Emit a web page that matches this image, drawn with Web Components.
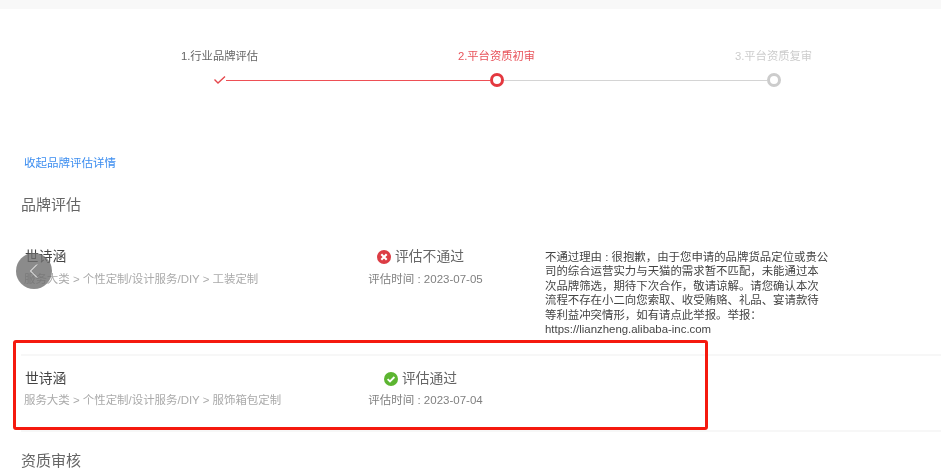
<!DOCTYPE html>
<html lang="zh">
<head>
<meta charset="utf-8">
<title>品牌评估</title>
<style>
    html, body { margin: 0; height: 470px; overflow: hidden; background: #fff; }
    body {
        position: relative;
        font-family: "Liberation Sans", "Noto Sans CJK SC", sans-serif;
        font-size: 11.5px;
        color: #666;
    }
</style>
</head>
<body>
<top-strip></top-strip>
<step-bar>
    <step-item state="done" first>1.行业品牌评估</step-item>
    <step-item state="active">2.平台资质初审</step-item>
    <step-item state="todo" last>3.平台资质复审</step-item>
</step-bar>
<main-panel>
    <toggle-link>收起品牌评估详情</toggle-link>
    <section-title>品牌评估</section-title>
    <brand-row name="世诗涵" path="服务大类 &gt; 个性定制/设计服务/DIY &gt; 工装定制" status="fail" label="评估不通过" time="评估时间 : 2023-07-05">
        不通过理由 : 很抱歉，由于您申请的品牌货品定位或贵公司的综合运营实力与天猫的需求暂不匹配，未能通过本次品牌筛选，期待下次合作，敬请谅解。请您确认本次流程不存在小二向您索取、收受贿赂、礼品、宴请款待等利益冲突情形，如有请点此举报。举报：<br>https://lianzheng.alibaba-inc.com
    </brand-row>
    <brand-row compact name="世诗涵" path="服务大类 &gt; 个性定制/设计服务/DIY &gt; 服饰箱包定制" status="pass" label="评估通过" time="评估时间 : 2023-07-04"></brand-row>
    <section-title tight>资质审核</section-title>
</main-panel>
<back-button></back-button>
<mark-box></mark-box>

<script>
class TopStrip extends HTMLElement {
    constructor() {
        super();
        this.attachShadow({ mode: 'open' });
    }

    connectedCallback() {
        this.shadowRoot.innerHTML = `
            <style>
                :host { display: block; height: 9px; background: #f8f8f8; }
            </style>
        `;
    }
}

class StepBar extends HTMLElement {
    constructor() {
        super();
        this.attachShadow({ mode: 'open' });
    }

    connectedCallback() {
        this.shadowRoot.innerHTML = `
            <style>
                :host {
                    display: grid;
                    grid-template-columns: repeat(3, 277px);
                    padding: 40px 0 0 81px;
                    filter: blur(.3px);
                }
            </style>
            <slot></slot>
        `;
    }
}

class StepItem extends HTMLElement {
    constructor() {
        super();
        this.attachShadow({ mode: 'open' });
    }

    connectedCallback() {
        const state = this.getAttribute('state');
        const check = `<svg width="14" height="10" viewBox="0 0 14 10"><path d="M1.5 4.5 L5 8 L12 1.5" fill="none" stroke="#e5484d" stroke-width="1.4"/></svg>`;
        const ring = `<span class="ring"></span>`;
        this.shadowRoot.innerHTML = `
            <style>
                :host {
                    display: flex;
                    flex-direction: column;
                    align-items: center;
                    gap: 10px;
                    font-size: 11.3px;
                    line-height: 14px;
                    color: #666;
                }
                :host([state="active"]) { color: #e8535a; }
                :host([state="todo"]) { color: #ccc; }
                .rail { display: flex; align-items: center; width: 100%; height: 14px; }
                .side { flex: 1; height: 1px; background: #d4d4d4; }
                .side.red { background: #ee4f55; }
                .side.off { background: transparent; }
                .node { flex: none; width: 14px; display: flex; justify-content: center; }
                :host([state="done"]) .node { margin-right: -1px; }
                .ring {
                    box-sizing: border-box;
                    width: 14px;
                    height: 14px;
                    border-radius: 50%;
                    border: 3px solid #ccc;
                    background: #fff;
                }
                :host([state="active"]) .ring { border-color: #e4383f; }
            </style>
            <slot></slot>
            <div class="rail">
                <span class="side ${this.hasAttribute('first') ? 'off' : (state === 'active' ? 'red' : '')}"></span>
                <span class="node">${state === 'done' ? check : ring}</span>
                <span class="side ${this.hasAttribute('last') ? 'off' : (state === 'done' ? 'red' : '')}"></span>
            </div>
        `;
    }
}

class MainPanel extends HTMLElement {
    constructor() {
        super();
        this.attachShadow({ mode: 'open' });
    }

    connectedCallback() {
        this.shadowRoot.innerHTML = `
            <style>
                :host { display: block; padding: 69px 0 0 21px; filter: blur(.3px); }
            </style>
            <slot></slot>
        `;
    }
}

class ToggleLink extends HTMLElement {
    constructor() {
        super();
        this.attachShadow({ mode: 'open' });
    }

    connectedCallback() {
        this.shadowRoot.innerHTML = `
            <style>
                :host {
                    display: block;
                    padding-left: 3px;
                    font-size: 11.5px;
                    line-height: 14px;
                    color: #3d8ef0;
                }
            </style>
            <slot></slot>
        `;
    }
}

class SectionTitle extends HTMLElement {
    constructor() {
        super();
        this.attachShadow({ mode: 'open' });
    }

    connectedCallback() {
        this.shadowRoot.innerHTML = `
            <style>
                :host {
                    display: block;
                    margin: 25px 0 32px;
                    font-size: 15px;
                    line-height: 20px;
                    color: #666;
                }
                :host([tight]) { margin: 19px 0 0; }
            </style>
            <slot></slot>
        `;
    }
}

class StatusBadge extends HTMLElement {
    constructor() {
        super();
        this.attachShadow({ mode: 'open' });
    }

    connectedCallback() {
        const icon = this.getAttribute('status') === 'pass'
            ? `<circle cx="7" cy="7" r="7" fill="#5cb531"/><path d="M3.6 7.2 L6 9.5 L10.4 5" fill="none" stroke="#fff" stroke-width="1.8"/>`
            : `<circle cx="7" cy="7" r="7" fill="#dc3c44"/><path d="M4.3 4.3 L9.7 9.7 M9.7 4.3 L4.3 9.7" fill="none" stroke="#fff" stroke-width="2.1"/>`;
        this.shadowRoot.innerHTML = `
            <style>
                :host {
                    display: inline-flex;
                    align-items: center;
                    gap: 4px;
                    margin-right: 10px;
                    font-size: 13.8px;
                    line-height: 20px;
                    color: #666;
                }
                svg { display: block; }
            </style>
            <svg width="14" height="14" viewBox="0 0 14 14">${icon}</svg>
            <slot></slot>
        `;
    }
}

class BrandRow extends HTMLElement {
    constructor() {
        super();
        this.attachShadow({ mode: 'open' });
    }

    connectedCallback() {
        const attr = name => this.getAttribute(name);
        this.shadowRoot.innerHTML = `
            <style>
                :host {
                    display: grid;
                    grid-template-columns: 344px 115px auto;
                    padding: 0 0 18px 3px;
                    border-bottom: 2px solid #f7f7f7;
                    align-items: start;
                }
                :host([compact]) { padding: 13px 0 23px 3px; }
                .name { margin-left: 1px; font-size: 13.8px; line-height: 20px; color: #444; }
                .path { margin-top: 5px; font-size: 11.45px; line-height: 14px; color: #aaa; }
                :host([compact]) .path { margin-top: 4px; }
                .status { display: flex; flex-direction: column; align-items: center; }
                .time { margin-top: 5px; font-size: 11.5px; line-height: 14px; color: #808080; white-space: nowrap; }
                :host([compact]) .time { margin-top: 4px; }
                .reason {
                    margin: 3px 0 0 62px;
                    width: 285px;
                    font-size: 11.42px;
                    line-height: 14.4px;
                    color: #444;
                }
            </style>
            <div>
                <div class="name">${attr('name')}</div>
                <div class="path">${attr('path')}</div>
            </div>
            <div class="status">
                <status-badge status="${attr('status')}">${attr('label')}</status-badge>
                <div class="time">${attr('time')}</div>
            </div>
            <div class="reason"><slot></slot></div>
        `;
    }
}

// floating carousel arrow, sits over the first row
class BackButton extends HTMLElement {
    constructor() {
        super();
        this.attachShadow({ mode: 'open' });
    }

    connectedCallback() {
        this.shadowRoot.innerHTML = `
            <style>
                :host {
                    position: absolute;
                    left: 16px;
                    top: 253px;
                    width: 36px;
                    height: 36px;
                    border-radius: 50%;
                    background: rgba(110, 110, 110, .8);
                    display: flex;
                    align-items: center;
                    justify-content: center;
                }
                svg { display: block; }
            </style>
            <svg width="10" height="16" viewBox="0 0 10 16"><path d="M8 1.5 L1.5 8 L8 14.5" fill="none" stroke="#fff" stroke-width="1"/></svg>
        `;
    }
}

// red annotation drawn on top of the screenshot
class MarkBox extends HTMLElement {
    constructor() {
        super();
        this.attachShadow({ mode: 'open' });
    }

    connectedCallback() {
        this.shadowRoot.innerHTML = `
            <style>
                :host {
                    position: absolute;
                    left: 13px;
                    top: 340px;
                    width: 689px;
                    height: 84px;
                    border: 3px solid #f5190f;
                    border-radius: 3px;
                }
            </style>
        `;
    }
}

customElements.define('top-strip', TopStrip);
customElements.define('step-bar', StepBar);
customElements.define('step-item', StepItem);
customElements.define('main-panel', MainPanel);
customElements.define('toggle-link', ToggleLink);
customElements.define('section-title', SectionTitle);
customElements.define('status-badge', StatusBadge);
customElements.define('brand-row', BrandRow);
customElements.define('back-button', BackButton);
customElements.define('mark-box', MarkBox);
</script>
</body>
</html>
